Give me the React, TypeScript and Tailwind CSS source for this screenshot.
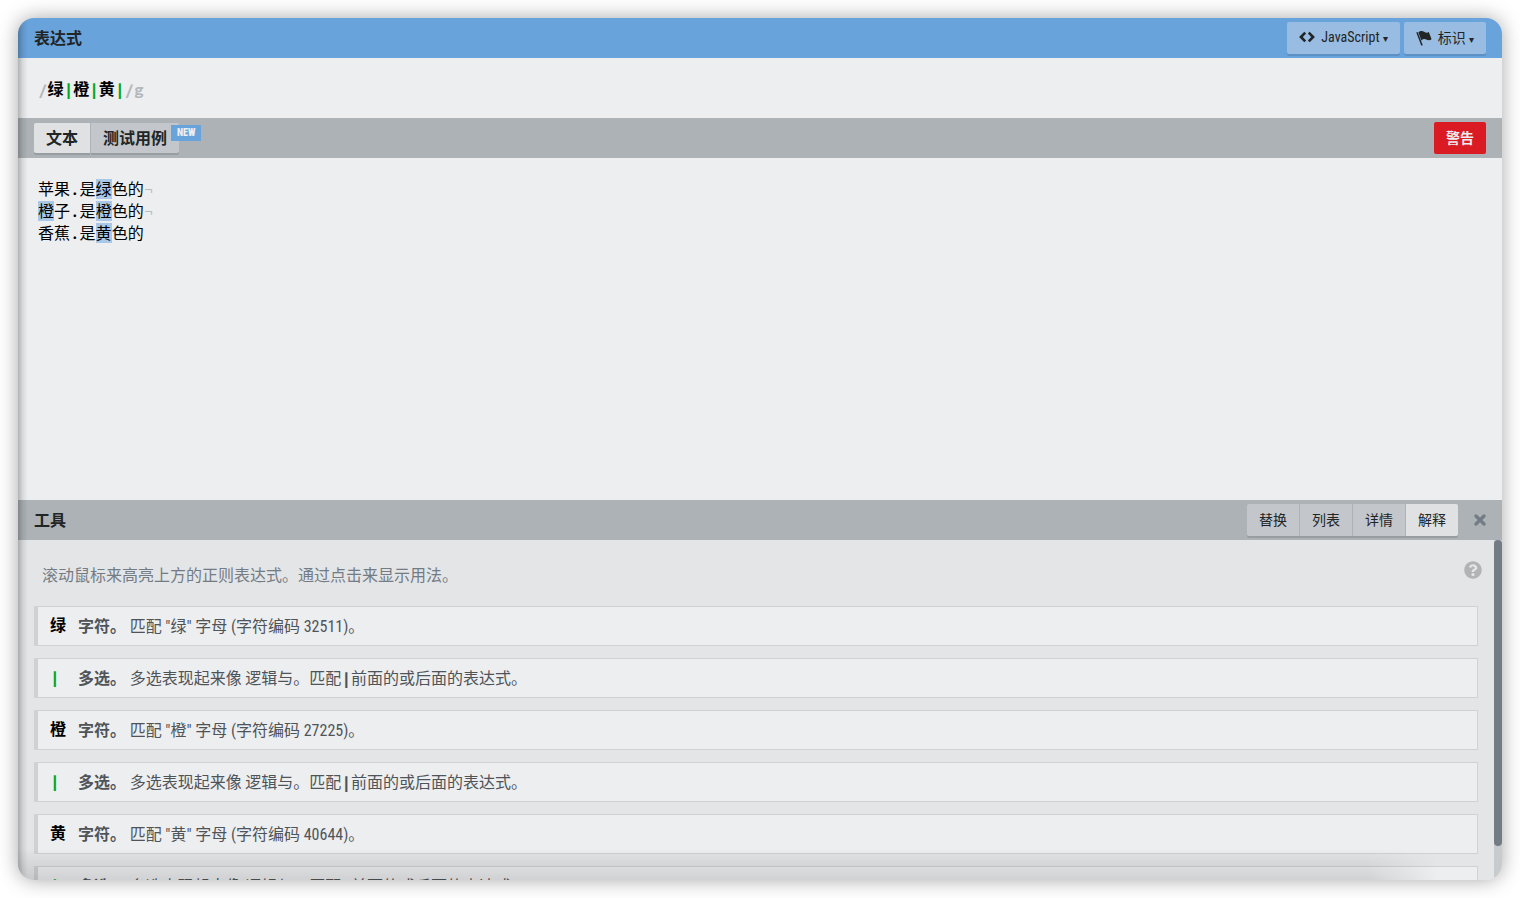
import React, { useState } from 'react';
import { FaQuestionCircle } from 'react-icons/fa';

const TOOLS = ['替换', '列表', '详情', '解释'];

const LINES = [
  { parts: ['苹果.是', '*绿', '色的'], newline: true },
  { parts: ['*橙', '子.是', '*橙', '色的'], newline: true },
  { parts: ['香蕉.是', '*黄', '色的'], newline: false },
];

const TOKENS = [
  { char: '绿', code: 32511 },
  { char: '|' },
  { char: '橙', code: 27225 },
  { char: '|' },
  { char: '黄', code: 40644 },
  { char: '|' },
];

const MONO = "font-['Source_Code_Pro','Liberation_Mono','Noto_Sans_CJK_SC',monospace]";

function CodeIcon() {
  return (
    <svg viewBox="0 0 16 12" className="w-4 h-3" fill="none" stroke="currentColor" strokeWidth="2.6" aria-hidden="true">
      <path d="M6.2 1.6 1.9 6l4.3 4.4M9.8 1.6 14.1 6l-4.3 4.4" />
    </svg>
  );
}

function FlagIcon() {
  return (
    <svg viewBox="0 0 16 16" className="size-4" fill="currentColor" aria-hidden="true">
      <path d="M0.3 2.6 1.6 2 6.8 15.2 5.2 15.6z" />
      <path d="M2.4 2.4C4.4 .4 6.4 .6 8.2 1.8c1.6 1 3 1.2 4.6 .2l2.8 7.2c-2 1.4-3.8 1-5.4 .2-1.8-.9-3.400-.6-4.8 1z" />
    </svg>
  );
}

function CloseIcon() {
  return (
    <svg viewBox="0 0 12 12" className="size-3" fill="none" stroke="currentColor" strokeWidth="3.2" strokeLinecap="round" aria-hidden="true">
      <path d="M2 2l8 8M10 2l-8 8" />
    </svg>
  );
}

function App() {
  const [tab, setTab] = useState('text');
  const [tool, setTool] = useState('解释');

  return (
    <div className="h-screen bg-white p-[18px] text-[#222526] font-['Roboto_Condensed','Liberation_Sans_Narrow',Roboto,'Noto_Sans_CJK_SC',sans-serif]">
      <div className="relative flex flex-col h-full overflow-hidden rounded-2xl bg-[#edeef0] shadow-[0_0_20px_rgba(0,0,0,0.35)]">
        <header className="flex items-center justify-between h-10 shrink-0 px-4 bg-[#69a3db]">
          <h2 className="pt-0.5 text-base font-bold">表达式</h2>
          <div className="flex gap-1">
            <button className="flex items-center gap-1.5 h-8 px-3 pb-0.5 rounded-xs bg-[#98bce2] shadow-[0_2px_0_#5c91c5] text-sm">
              <CodeIcon />
              <span>JavaScript <span className="text-[10px]">▾</span></span>
            </button>
            <button className="flex items-center gap-1.5 h-8 px-3 rounded-xs bg-[#98bce2] shadow-[0_2px_0_#5c91c5] text-sm">
              <FlagIcon />
              <span>标识 <span className="text-[10px]">▾</span></span>
            </button>
          </div>
        </header>

        <div
          role="textbox"
          aria-label="表达式"
          contentEditable
          suppressContentEditableWarning
          className={`flex items-center h-15 shrink-0 px-5 pt-0.5 text-base font-bold text-black outline-none whitespace-pre ${MONO}`}
        >
          <span className="text-[#b3b8bc]">/</span>绿<span className="text-[#00a81c]">|</span>橙<span className="text-[#00a81c]">|</span>黄<span className="text-[#00a81c]">|</span><span className="text-[#b3b8bc]">/g</span>
        </div>

        <div className="flex items-center justify-between h-10 shrink-0 px-4 bg-[#adb2b6]">
          <div className="flex gap-px text-base font-bold">
            <button
              onClick={() => setTab('text')}
              className={`h-[30px] px-3 pt-0.5 rounded-l-xs shadow-[0_2px_0_#989da2] ${tab === 'text' ? 'bg-[#dfe1e3]' : 'bg-[#c3c7cc]'}`}
            >
              文本
            </button>
            <button
              onClick={() => setTab('tests')}
              className={`relative h-[30px] px-3 pt-0.5 rounded-r-xs shadow-[0_2px_0_#989da2] ${tab === 'tests' ? 'bg-[#dfe1e3]' : 'bg-[#c3c7cc]'}`}
            >
              测试用例
              <span className="absolute left-20 top-0.5 h-4 px-1.5 bg-[#69a3db] text-[10px] leading-4 font-black text-[#edeef0]">NEW</span>
            </button>
          </div>
          <button className="h-8 px-3 rounded-xs bg-[#da1b24] text-sm font-bold text-[#edeef0]">警告</button>
        </div>

        <div
          role="textbox"
          aria-label="文本"
          aria-multiline="true"
          contentEditable
          suppressContentEditableWarning
          className={`flex-1 min-h-0 px-5 py-5 text-base leading-[22px] text-black outline-none whitespace-pre ${MONO}`}
        >
          {LINES.map((line, i) => (
            <div key={i} className="h-[22px]">
              {line.parts.map((part, j) =>
                part.startsWith('*') ? (
                  <span key={j} className="inline-block h-5 leading-5 bg-[#a9c8e8]">{part.slice(1)}</span>
                ) : (
                  <span key={j}>{part}</span>
                )
              )}
              {line.newline && <span className="text-[#b9bcbf]">¬</span>}
            </div>
          ))}
        </div>

        <section className="flex flex-col h-95 shrink-0 bg-[#e4e5e7]">
          <div className="flex items-center justify-between h-10 shrink-0 px-4 bg-[#adb2b6]">
            <h2 className="pt-0.5 text-base font-bold">工具</h2>
            <div className="flex items-center gap-4">
              <div className="flex gap-px rounded-xs shadow-[0_2px_0_#989da2]">
                {TOOLS.map((name) => (
                  <button
                    key={name}
                    onClick={() => setTool(name)}
                    className={`h-8 px-3 text-sm first:rounded-l-xs last:rounded-r-xs ${tool === name ? 'bg-[#dfe1e3]' : 'bg-[#c3c7cc]'}`}
                  >
                    {name}
                  </button>
                ))}
              </div>
              <button aria-label="关闭" className="text-[#737c85]">
                <CloseIcon />
              </button>
            </div>
          </div>

          <div className="flex flex-1 min-h-0">
            <div className="flex-1 overflow-hidden px-4 pt-5">
              <div className="flex items-start justify-between pl-2 pb-3.5 -mr-1">
                <p className="leading-8 text-base text-[#737c85]">滚动鼠标来高亮上方的正则表达式。通过点击来显示用法。</p>
                <button aria-label="帮助" className="pt-px text-[#b1b3b5]">
                  <FaQuestionCircle className="size-[18px]" />
                </button>
              </div>
              <ul className="flex flex-col gap-3 text-base text-[#4f5458]">
                {TOKENS.map((token, i) => (
                  <li key={i} className="flex items-center h-10 shrink-0 px-3 pt-0.5 bg-[#edeef0] border border-l-4 border-[#cfd1d3]">
                    {token.code ? (
                      <>
                        <span className="w-7 pb-0.5 font-bold text-black">{token.char}</span>
                        <span><b>字符。</b> 匹配 "{token.char}" 字母 (字符编码 {token.code})。</span>
                      </>
                    ) : (
                      <>
                        <span className={`w-7 pb-1 font-bold text-[#00a81c] ${MONO}`}>|</span>
                        <span><b>多选。</b> 多选表现起来像 逻辑与。匹配<b className={`leading-none ${MONO}`}>|</b>前面的或后面的表达式。</span>
                      </>
                    )}
                  </li>
                ))}
              </ul>
            </div>
            <div className="w-2 bg-[#c8cbcd]">
              <div className="h-9/10 rounded-full bg-[#737c85]" />
            </div>
          </div>
        </section>

        <div className="absolute inset-y-0 left-0 w-2.5 pointer-events-none bg-linear-to-r from-black/25 via-black/8 to-transparent" />
        <div className="absolute bottom-0 left-0 right-16 h-8 pointer-events-none bg-linear-to-t from-black/12 to-transparent mask-r-from-95%" />
      </div>
    </div>
  );
}

export default App;
